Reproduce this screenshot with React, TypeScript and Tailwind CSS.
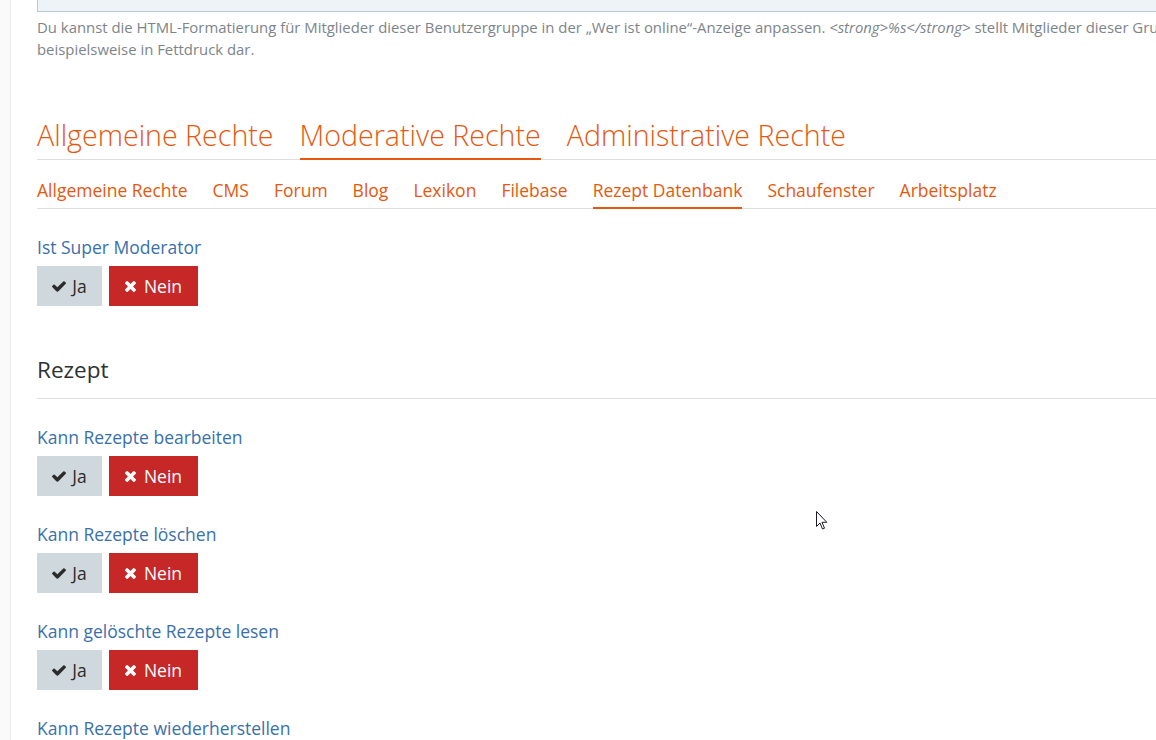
import React from "react";

const mainTabs = ["Allgemeine Rechte", "Moderative Rechte", "Administrative Rechte"];
const subTabs = [
  "Allgemeine Rechte",
  "CMS",
  "Forum",
  "Blog",
  "Lexikon",
  "Filebase",
  "Rezept Datenbank",
  "Schaufenster",
  "Arbeitsplatz",
];

function CheckIcon() {
  return (
    <svg width="14" height="11" viewBox="121 334 1550 1188" fill="currentColor">
      <path d="M1671 566q0 40-28 68l-724 724-136 136q-28 28-68 28t-68-28l-136-136-362-362q-28-28-28-68t28-68l136-136q28-28 68-28t68 28l294 295 656-657q28-28 68-28t68 28l136 136q28 28 28 68z" />
    </svg>
  );
}

function TimesIcon() {
  return (
    <svg width="11" height="11" viewBox="302 366 1188 1188" fill="currentColor">
      <path d="M1490 1322q0 40-28 68l-136 136q-28 28-68 28t-68-28l-294-294-294 294q-28 28-68 28t-68-28l-136-136q-28-28-28-68t28-68l294-294-294-294q-28-28-28-68t28-68l136-136q28-28 68-28t68 28l294 294 294-294q28-28 68-28t68 28l136 136q28 28 28 68t-28 68l-294 294 294 294q28 28 28 68z" />
    </svg>
  );
}

function YesNo() {
  return (
    <div className="mt-[7px] flex gap-[7px]">
      <button className="flex h-[40px] w-[65px] items-center justify-center gap-[6px] bg-[#cfd8dc] text-[17.5px] text-[#2b2b2b]">
        <CheckIcon />
        <span>Ja</span>
      </button>
      <button className="flex h-[40px] w-[89px] items-center justify-center gap-[8px] bg-[#c62828] text-[17.5px] text-white">
        <TimesIcon />
        <span>Nein</span>
      </button>
    </div>
  );
}

function Option({ label, buttons = true }: { label: string; buttons?: boolean }) {
  return (
    <div className="mt-[26px]">
      <div className="text-[17.5px] leading-[24px] text-[#3a70aa]">{label}</div>
      {buttons && <YesNo />}
    </div>
  );
}

export default function App() {
  return (
    <div className="relative flex h-[740px] w-[1156px] overflow-hidden bg-white font-['Open_Sans',sans-serif]">
      <div className="w-[11px] shrink-0 border-r border-[#ebebeb] bg-[#fafafa]" />
      <div className="w-[1220px] shrink-0 pl-[26px]">
        <div className="h-[12px] border-b border-l border-[#b9c9db] bg-[#eef3f8]" />
        <p className="mt-[4px] text-[14.9px] leading-[22px] text-[#7d8589]">
          Du kannst die HTML-Formatierung für Mitglieder dieser Benutzergruppe in der „Wer ist online“-Anzeige
          anpassen. <em>&lt;strong&gt;%s&lt;/strong&gt;</em> stellt Mitglieder dieser Gruppe beispielsweise in
          Fettdruck dar.
        </p>

        <div className="mt-[55px] flex gap-[26px] border-b border-[#dedede]">
          {mainTabs.map((t) => (
            <div
              key={t}
              className={
                "-mb-px pb-[3px] text-[28.6px] font-light leading-[40px] text-[#e6580f] " +
                (t === "Moderative Rechte" ? "border-b-2 border-[#e6580f]" : "border-b-2 border-transparent")
              }
            >
              {t}
            </div>
          ))}
        </div>

        <div className="mt-[18px] flex gap-[25px] border-b border-[#dedede]">
          {subTabs.map((t) => (
            <div
              key={t}
              className={
                "-mb-px pb-[5px] text-[17.5px] leading-[24px] text-[#e6580f] " +
                (t === "Rezept Datenbank" ? "border-b-2 border-[#e6580f]" : "border-b-2 border-transparent")
              }
            >
              {t}
            </div>
          ))}
        </div>

        <Option label="Ist Super Moderator" />

        <h2 className="mt-[49px] border-b border-[#dedede] pb-[13px] text-[22.5px] leading-[30px] text-[#2d3133]">
          Rezept
        </h2>

        <Option label="Kann Rezepte bearbeiten" />
        <Option label="Kann Rezepte löschen" />
        <Option label="Kann gelöschte Rezepte lesen" />
        <Option label="Kann Rezepte wiederherstellen" buttons={false} />
      </div>

      <svg
        className="absolute left-[816px] top-[511px]"
        width="13"
        height="20"
        viewBox="0 0 13 20"
      >
        <path
          d="M0.5 0.5 L0.5 15.5 L4 12 L6.5 18 L8.5 17.2 L6 11.3 L10.8 11.3 Z"
          fill="white"
          stroke="#1a1a2a"
          strokeWidth="1"
          strokeLinejoin="round"
        />
      </svg>
    </div>
  );
}
